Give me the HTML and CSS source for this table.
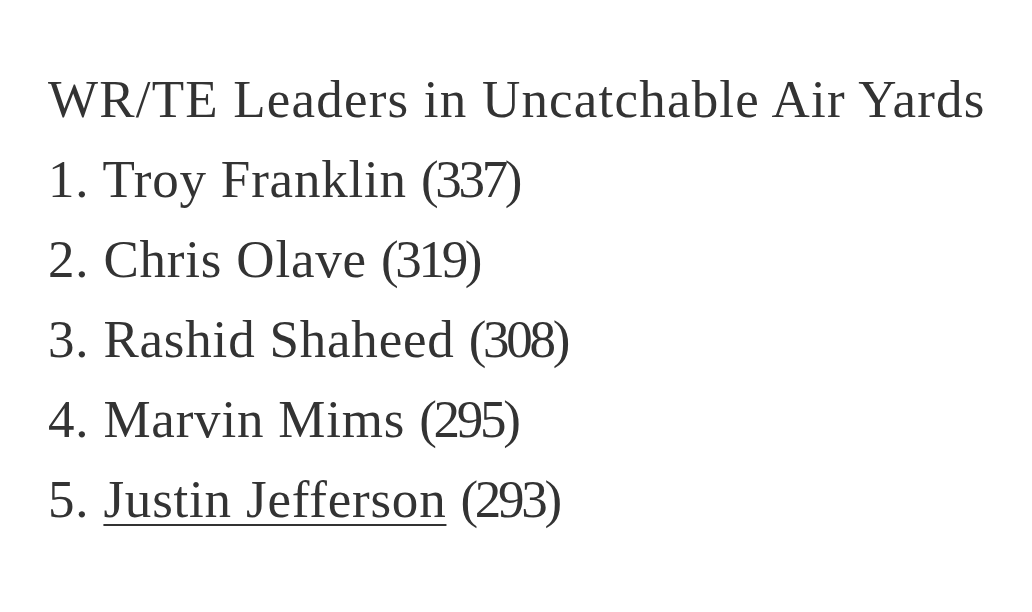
FILE: index.html
```html
<!DOCTYPE html>
<html>
<head>
<meta charset="utf-8">
<link rel="stylesheet" href="styles.css">
</head>
<body>
<div class="list">
  <p class="line title">WR/TE Leaders in Uncatchable Air Yards</p>
  <p class="line">1. Troy Franklin <span class="count">(337)</span></p>
  <p class="line">2. Chris Olave <span class="count">(319)</span></p>
  <p class="line">3. Rashid Shaheed <span class="count">(308)</span></p>
  <p class="line">4. Marvin Mims <span class="count">(295)</span></p>
  <p class="line">5. <span class="link">Justin Jefferson</span> <span class="count">(293)</span></p>
</div>
</body>
</html>
```
FILE: styles.css
```css
html, body {
  margin: 0;
  padding: 0;
  background: #ffffff;
}
.list {
  padding: 59px 0 0 48px;
  font-family: "Liberation Serif", "DejaVu Serif", serif;
  font-size: 53px;
  line-height: 80px;
  color: #333333;
  letter-spacing: 0.8px;
}
.line {
  margin: 0;
  white-space: nowrap;
}
.title {
  letter-spacing: 1.2px;
}
.count {
  letter-spacing: -3.3px;
}
.link {
  text-decoration: underline;
  text-decoration-thickness: 2px;
  text-underline-offset: 7px;
}
```
